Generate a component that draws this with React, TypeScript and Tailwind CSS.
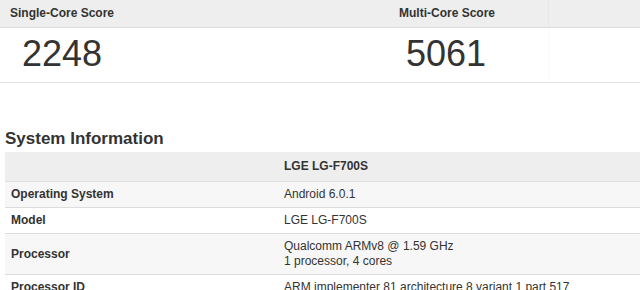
import React from 'react';

const rows: { label: string; value: string[]; shade: boolean }[] = [
  { label: 'Operating System', value: ['Android 6.0.1'], shade: true },
  { label: 'Model', value: ['LGE LG-F700S'], shade: false },
  { label: 'Processor', value: ['Qualcomm ARMv8 @ 1.59 GHz', '1 processor, 4 cores'], shade: true },
  { label: 'Processor ID', value: ['ARM implementer 81 architecture 8 variant 1 part 517'], shade: false },
];

export default function App() {
  return (
    <div className="w-[640px] h-[290px] overflow-hidden bg-white text-[#333] font-['Liberation_Sans',Arial,sans-serif]">
      {/* scores */}
      <div className="grid grid-cols-[393px_155px_1fr] bg-[#eeeeee] border-b border-[#dddddd] text-[12px] leading-[15px] font-bold">
        <div className="pl-[10px] py-[6px]">Single-Core Score</div>
        <div className="pl-[6px] py-[6px]">Multi-Core Score</div>
        <div className="border-l border-[#e8e8e8]" />
      </div>
      <div className="grid grid-cols-[393px_155px_1fr] border-b border-[#e2e2e2] text-[36px] leading-[40px]">
        <div className="pl-[22px] pt-[6px] pb-[8px]">2248</div>
        <div className="pl-[13px] pt-[6px] pb-[8px]">5061</div>
        <div className="border-l border-[#fafafa]" />
      </div>

      {/* system information */}
      <h2 className="mt-[44px] ml-[5px] text-[17px] leading-[24px] font-bold">System Information</h2>
      <div className="ml-[5px] mt-[1px] text-[12px] leading-[15px]">
        <div className="grid grid-cols-[273px_1fr] bg-[#eeeeee] border-b border-[#dddddd]">
          <div className="py-[7px]" />
          <div className="pl-[6px] py-[7px] font-bold">LGE LG-F700S</div>
        </div>
        {rows.map((r) => (
          <div
            key={r.label}
            className={`grid grid-cols-[273px_1fr] border-b border-[#dddddd] items-center ${r.shade ? 'bg-[#f7f7f7]' : 'bg-white'}`}
          >
            <div className="pl-[6px] py-[5px] font-bold">{r.label}</div>
            <div className="pl-[6px] py-[5px]">
              {r.value.map((v) => (
                <div key={v}>{v}</div>
              ))}
            </div>
          </div>
        ))}
      </div>
    </div>
  );
}
